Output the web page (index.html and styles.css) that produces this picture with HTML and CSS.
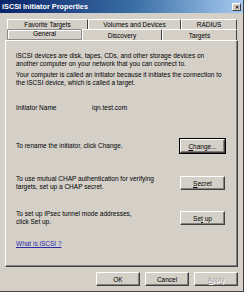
FILE: index.html
```html
<!DOCTYPE html>
<html lang="en">
<head>
    <meta charset="UTF-8">
    <title>iSCSI Initiator Properties</title>
    <link rel="stylesheet" href="styles.css">
</head>
<body>
    <div class="window">
        <div class="titlebar">
            <span class="title">iSCSI Initiator Properties</span>
            <span class="close">&#x2715;</span>
        </div>

        <!-- Two rows of tabs, General is the active one -->
        <div class="tabs">
            <div class="tab-row back">
                <div class="tab tab-fav">Favorite Targets</div>
                <div class="tab tab-vol">Volumes and Devices</div>
                <div class="tab tab-radius">RADIUS</div>
            </div>
            <div class="tab-row front">
                <div class="tab tab-general active">General</div>
                <div class="tab tab-discovery">Discovery</div>
                <div class="tab tab-targets">Targets</div>
            </div>
        </div>

        <div class="panel">
            <p class="intro">iSCSI devices are disk, tapes, CDs, and other storage devices on another computer on your network that you can connect to.</p>
            <p class="intro second">Your computer is called an initiator because it initiates the connection to the iSCSI device, which is called a target.</p>

            <div class="name-row">
                <span class="name-label">Initiator Name</span>
                <span>iqn.test.com</span>
            </div>

            <div class="action-row row-change">
                <span class="action-text">To rename the initiator, click Change.</span>
                <button class="btn btn-focus"><u>C</u>hange...</button>
            </div>

            <div class="action-row row-secret">
                <span class="action-text">To use mutual CHAP authentication for verifying targets, set up a CHAP secret.</span>
                <button class="btn"><u>S</u>ecret</button>
            </div>

            <div class="action-row row-setup">
                <span class="action-text">To set up IPsec tunnel mode addresses,<br>click Set up.</span>
                <button class="btn">Se<u>t</u> up</button>
            </div>

            <a class="help-link">What is iSCSI ?</a>
        </div>

        <div class="footer">
            <button class="btn">OK</button>
            <button class="btn">Cancel</button>
            <button class="btn disabled"><u>A</u>pply</button>
        </div>
    </div>
</body>
</html>
```

FILE: styles.css
```css
* {
    margin: 0;
    padding: 0;
    box-sizing: border-box;
}

body {
    font-family: 'Liberation Sans', Arial, sans-serif;
    font-size: 6.5px;
    color: #000;
    background: #d4d0c8;
}

.window {
    width: 244px;
    height: 292px;
    background: #d4d0c8;
    border-right: 1px solid #404040;
    border-bottom: 1px solid #404040;
    overflow: hidden;
}

/* Title bar */
.titlebar {
    height: 13px;
    display: flex;
    align-items: center;
    justify-content: space-between;
    padding: 0 2px 0 2px;
    background: linear-gradient(90deg, #0a246a, #3a6ea5 55%, #a6caf0);
}

.title {
    color: #fff;
    font-weight: bold;
    font-size: 7.3px;
}

.close {
    width: 9px;
    height: 8px;
    background: #d4d0c8;
    border-top: 1px solid #fff;
    border-left: 1px solid #fff;
    border-right: 1px solid #404040;
    border-bottom: 1px solid #404040;
    font-size: 5px;
    font-weight: bold;
    line-height: 6px;
    text-align: center;
    color: #000;
}

/* Tabs */
.tabs {
    margin-top: 6px;
    padding-left: 7px;
}

.tab-row {
    display: flex;
}

.tab {
    text-align: center;
    border-top: 1px solid #fff;
    border-left: 1px solid #fff;
    border-right: 1px solid #404040;
    border-top-left-radius: 1px;
    border-top-right-radius: 1px;
    background: #d4d0c8;
}

.back .tab {
    height: 10px;
    line-height: 9px;
}

.front .tab {
    height: 11px;
    line-height: 11px;
}

.tab-fav { width: 81px; }
.tab-vol { width: 93px; }
.tab-radius { width: 56px; }

.tab-general { width: 75px; }
.tab-discovery { width: 80px; }
.tab-targets { width: 75px; }

.tab.active {
    line-height: 8px;
    border: 1px solid #8a8a8a;
    box-shadow: inset 1px 1px 0 #fff;
}

/* Panel */
.panel {
    margin-left: 5px;
    width: 233px;
    height: 227px;
    border-top: 1px solid #fff;
    border-left: 1px solid #fff;
    border-right: 1px solid #404040;
    border-bottom: 1px solid #404040;
    box-shadow: inset -1px -1px 0 #808080;
    padding: 11px 12px 0 10px;
    line-height: 8px;
}

.intro.second {
    margin-top: 3px;
}

.name-row {
    display: flex;
    margin-top: 17px;
}

.name-label {
    width: 76px;
}

.action-row {
    display: flex;
    align-items: center;
    justify-content: space-between;
}

.row-change { margin-top: 27px; }
.row-secret { margin-top: 22px; }
.row-setup { margin-top: 19px; }

.action-text {
    width: 150px;
}

.help-link {
    display: block;
    margin-top: 14px;
    color: #2a2aa8;
    text-decoration: underline;
}

/* Windows classic push buttons */
.btn {
    width: 45px;
    height: 14px;
    font-family: inherit;
    font-size: 6.5px;
    color: #000;
    background: #d4d0c8;
    border-top: 1px solid #fff;
    border-left: 1px solid #fff;
    border-right: 1px solid #404040;
    border-bottom: 1px solid #404040;
    box-shadow: inset -1px -1px 0 #808080;
}

.btn-focus {
    outline: 1px solid #000;
}

.btn.disabled {
    color: #a0a0a0;
    text-shadow: 1px 1px 0 #fff;
}

.footer {
    display: flex;
    justify-content: flex-end;
    gap: 5px;
    margin-top: 5px;
    padding-right: 5px;
}

.footer .btn {
    width: 44px;
}
```
